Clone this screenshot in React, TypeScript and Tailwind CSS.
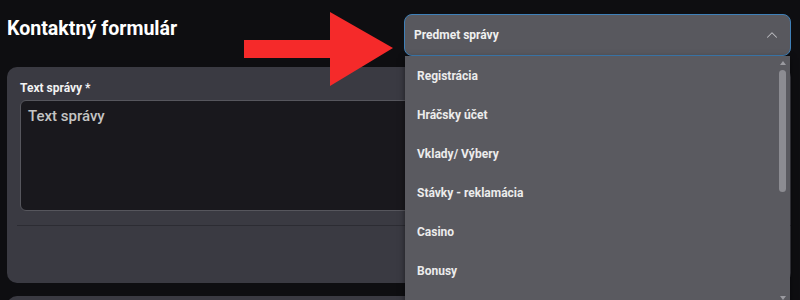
import { ChevronUp } from "lucide-react";

const options = [
  "Registrácia",
  "Hráčsky účet",
  "Vklady/ Výbery",
  "Stávky - reklamácia",
  "Casino",
  "Bonusy",
];

export default function App() {
  return (
    <div
      className="relative h-[300px] w-[800px] overflow-hidden bg-[#0e0e11] text-white"
      style={{ fontFamily: "Roboto, 'Noto Sans', sans-serif" }}
    >
      {/* header */}
      <div className="flex items-start justify-between pl-[7px] pr-[9px] pt-[14px]">
        <h1 className="mt-[1px] text-[19.6px] font-bold leading-[28px] text-white">Kontaktný formulár</h1>
        <div className="flex h-[42px] w-[387px] items-center justify-between rounded-[8px] border-[1.5px] border-[#3f80b8] bg-[#58585e] pl-[9px] pr-[9px]">
          <span className="text-[12px] font-bold text-[#f0f0f0]">Predmet správy</span>
          <ChevronUp size={18} strokeWidth={1.4} className="text-[#bdbdc2]" />
        </div>
      </div>

      {/* form card */}
      <div className="ml-[7px] mr-[9px] mt-[11px] h-[216px] rounded-[10px] bg-[#3a3a42] pt-[14px]">
        <label className="block pl-[13px] text-[12px] font-bold leading-[15px] text-[#f2f2f2]">
          Text správy *
        </label>
        <div className="ml-[13px] mr-[13px] mt-[4px] h-[111px] rounded-[6px] border border-[#56565d] bg-[#19181d] px-[7px] pt-[3px]">
          <span className="text-[15px] font-medium leading-[20px] text-[#c4c4c4]">Text správy</span>
        </div>
        <div className="ml-[10px] mt-[14px] h-px bg-[#2c2c33]" />
      </div>
      <div className="ml-[7px] mr-[9px] mt-[13px] h-[20px] rounded-t-[10px] bg-[#3a3a42]" />

      {/* dropdown menu */}
      <div className="absolute left-[405px] top-[56px] h-[260px] w-[385px] bg-[#5a5a60] shadow-[0_2px_6px_rgba(0,0,0,0.5)]">
        <ul className="pr-[14px]">
          {options.map((o) => (
            <li
              key={o}
              className="flex h-[39px] items-center pl-[12px] text-[12px] font-bold text-[#ececec]"
            >
              {o}
            </li>
          ))}
        </ul>
        {/* scrollbar */}
        <div className="absolute right-[3px] top-0 flex h-[244px] w-[9px] flex-col items-center">
          <div className="mt-[5px] h-0 w-0 border-x-[3px] border-b-[4px] border-x-transparent border-b-[#9a9aa0]" />
          <div className="mt-[5px] h-[122px] w-[7px] rounded-[4px] bg-[#8c8c92]" />
          <div className="mt-auto h-0 w-0 border-x-[3px] border-t-[4px] border-x-transparent border-t-[#9a9aa0]" />
        </div>
      </div>

      {/* red arrow */}
      <svg className="absolute left-[244px] top-[12px]" width="150" height="76" viewBox="0 0 150 76">
        <polygon points="0,28 86,28 86,0 149,36 86,74 86,46 0,46" fill="#f52a2a" />
      </svg>
    </div>
  );
}
